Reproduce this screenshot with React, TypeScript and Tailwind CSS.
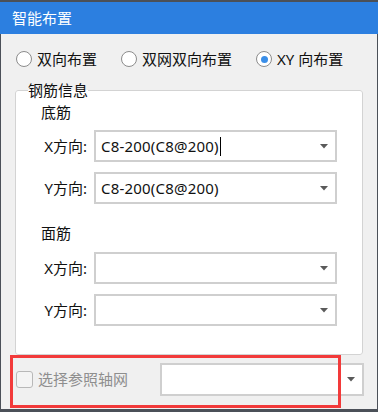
import React from 'react'

const font = { fontFamily: '"Noto Sans", "Noto Sans CJK SC", sans-serif' }

function Arrow() {
  return (
    <svg width="8" height="5" viewBox="0 0 8 5" className="shrink-0">
      <path d="M0 0 L8 0 L4 4.5 Z" fill="#5a5a5a" />
    </svg>
  )
}

function Combo({ value, caret }: { value?: string; caret?: boolean }) {
  return (
    <div className="flex h-[32px] w-[243px] items-center border-2 border-[#cfcfcf] bg-white pl-[5px] pr-[7px]">
      <div className="flex flex-1 items-center text-[15px] tracking-[0.2px] text-[#111]">
        {value}
        {caret && <span className="ml-[1px] h-[19px] w-px bg-black" />}
      </div>
      <Arrow />
    </div>
  )
}

function Radio({ label, checked }: { label: string; checked?: boolean }) {
  return (
    <div className="flex items-center gap-[5px]">
      <span className="flex h-[16px] w-[16px] items-center justify-center rounded-full border border-[#8c8c8c] bg-white">
        {checked && <span className="h-[7px] w-[7px] rounded-full bg-[#3a8ee8]" />}
      </span>
      <span className="text-[15px] leading-[20px] text-[#111]">{label}</span>
    </div>
  )
}

function Row({ label, value, caret }: { label: string; value?: string; caret?: boolean }) {
  return (
    <div className="flex items-center gap-[7px]">
      <span className="w-[46px] text-right text-[15px] text-[#111]">{label}</span>
      <Combo value={value} caret={caret} />
    </div>
  )
}

export default function App() {
  return (
    <div className="flex h-[412px] w-[378px] flex-col overflow-hidden bg-[#4b5058]" style={font}>
      <div className="mt-[2px] flex h-[32px] items-center bg-[#2c7fe0] pl-[12px] text-[15px] text-white">
        智能布置
      </div>
      <div className="relative mx-[1px] flex h-[375px] flex-col bg-[#f0f0f0]">
        {/* radios */}
        <div className="mt-[15px] flex items-center pl-[15px]">
          <Radio label="双向布置" />
          <div className="ml-[24px]">
            <Radio label="双网双向布置" />
          </div>
          <div className="ml-[24px]">
            <Radio label="XY 向布置" checked />
          </div>
        </div>

        {/* group box */}
        <fieldset className="ml-[14px] mt-[11px] w-[348px] rounded-[3px] border border-[#d3d3d3] bg-white">
          <legend className="ml-[12px] text-[15px] leading-[20px] text-[#111]">钢筋信息</legend>
          <div className="flex flex-col pb-[28px] pl-[25px] pt-[2px]">
            <div className="text-[15px] leading-[20px] text-[#111]">底筋</div>
            <div className="mt-[8px] flex flex-col gap-[10px]">
              <Row label="X方向:" value="C8-200(C8@200)" caret />
              <Row label="Y方向:" value="C8-200(C8@200)" />
            </div>
            <div className="mt-[19px] text-[15px] leading-[20px] text-[#111]">面筋</div>
            <div className="mt-[9px] flex flex-col gap-[10px]">
              <Row label="X方向:" />
              <Row label="Y方向:" />
            </div>
          </div>
        </fieldset>

        {/* bottom row */}
        <div className="mt-[8px] flex items-center pl-[15px]">
          <span className="h-[17px] w-[17px] rounded-[3px] border border-[#b8b8b8] bg-[#f4f4f4]" />
          <span className="ml-[5px] text-[15px] text-[#8e8e8e]">选择参照轴网</span>
          <div className="ml-[32px] flex h-[33px] w-[204px] items-center justify-end border-2 border-[#cfcfcf] bg-white pr-[7px]">
            <Arrow />
          </div>
        </div>

        {/* red annotation */}
        <div className="absolute left-[9px] top-[321px] h-[53px] w-[331px] border-[3px] border-[#f23a3a]" />
      </div>
    </div>
  )
}
